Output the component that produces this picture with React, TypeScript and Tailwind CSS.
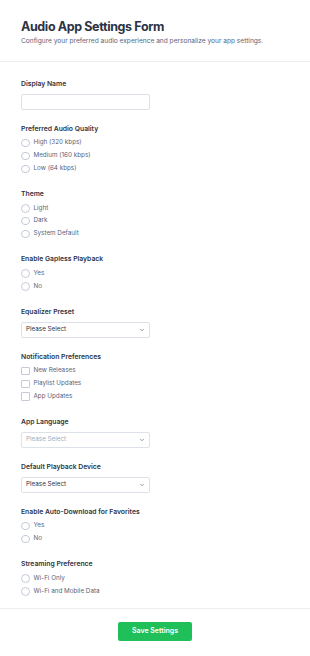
import { ChevronDown } from "lucide-react";

const font = { fontFamily: "Inter, 'Noto Sans', sans-serif" };

function Label({ children }: { children: React.ReactNode }) {
  return (
    <div className="text-[6.8px] leading-[10px] font-semibold text-[#2c3345]">
      {children}
    </div>
  );
}

function RadioGroup({ label, options }: { label: string; options: string[] }) {
  return (
    <div className="flex flex-col">
      <Label>{label}</Label>
      <div className="mt-[2.8px] flex flex-col">
        {options.map((o) => (
          <label key={o} className="flex h-[12.8px] items-center gap-[4px]">
            <span className="h-[8.5px] w-[8.5px] rounded-full border border-[#c3cad8] bg-white" />
            <span className="text-[6.3px] text-[#57647e]">{o}</span>
          </label>
        ))}
      </div>
    </div>
  );
}

function CheckGroup({ label, options }: { label: string; options: string[] }) {
  return (
    <div className="flex flex-col">
      <Label>{label}</Label>
      <div className="mt-[2.8px] flex flex-col">
        {options.map((o) => (
          <label key={o} className="flex h-[12.8px] items-center gap-[4px]">
            <span className="h-[8.5px] w-[8.5px] rounded-[1px] border border-[#c3cad8] bg-white" />
            <span className="text-[6.3px] text-[#57647e]">{o}</span>
          </label>
        ))}
      </div>
    </div>
  );
}

function Select({ label, muted }: { label: string; muted?: boolean }) {
  return (
    <div className="flex flex-col">
      <Label>{label}</Label>
      <div className="mt-[5px] flex h-[16px] w-[129px] items-center justify-between rounded-[2px] border border-[#dde2ea] bg-white px-[4px]">
        <span className={`text-[6.3px] ${muted ? "text-[#a4acba]" : "text-[#2c3345]"}`}>
          Please Select
        </span>
        <ChevronDown className="h-[6px] w-[6px] text-[#57647e]" strokeWidth={2.5} />
      </div>
    </div>
  );
}

export default function App() {
  return (
    <div className="min-h-screen w-full bg-white" style={font}>
      <div className="px-[21px] pt-[17px] pb-[15px] border-b border-[#eceef2]">
        <h1 className="text-[12.5px] leading-[19px] font-bold tracking-[-0.03em] text-[#2c3345]">
          Audio App Settings Form
        </h1>
        <p className="mt-[1px] text-[6.6px] leading-[9px] text-[#57647e]">
          Configure your preferred audio experience and personalize your app settings.
        </p>
      </div>

      <div className="flex flex-col gap-[14px] px-[21px] pt-[17px] pb-[10.5px] border-b border-[#eceef2]">
        <div className="flex flex-col">
          <Label>Display Name</Label>
          <div className="mt-[5px] h-[16px] w-[129px] rounded-[2px] border border-[#dde2ea] bg-white" />
        </div>
        <RadioGroup
          label="Preferred Audio Quality"
          options={["High (320 kbps)", "Medium (160 kbps)", "Low (64 kbps)"]}
        />
        <RadioGroup label="Theme" options={["Light", "Dark", "System Default"]} />
        <RadioGroup label="Enable Gapless Playback" options={["Yes", "No"]} />
        <Select label="Equalizer Preset" />
        <CheckGroup
          label="Notification Preferences"
          options={["New Releases", "Playlist Updates", "App Updates"]}
        />
        <Select label="App Language" muted />
        <Select label="Default Playback Device" />
        <RadioGroup label="Enable Auto-Download for Favorites" options={["Yes", "No"]} />
        <RadioGroup label="Streaming Preference" options={["Wi-Fi Only", "Wi-Fi and Mobile Data"]} />
      </div>

      <div className="flex justify-center pt-[12.5px] pb-[16px]">
        <button className="h-[19px] w-[74px] rounded-[2px] bg-[#1fbf5a] text-[7px] font-semibold text-white">
          Save Settings
        </button>
      </div>
    </div>
  );
}
